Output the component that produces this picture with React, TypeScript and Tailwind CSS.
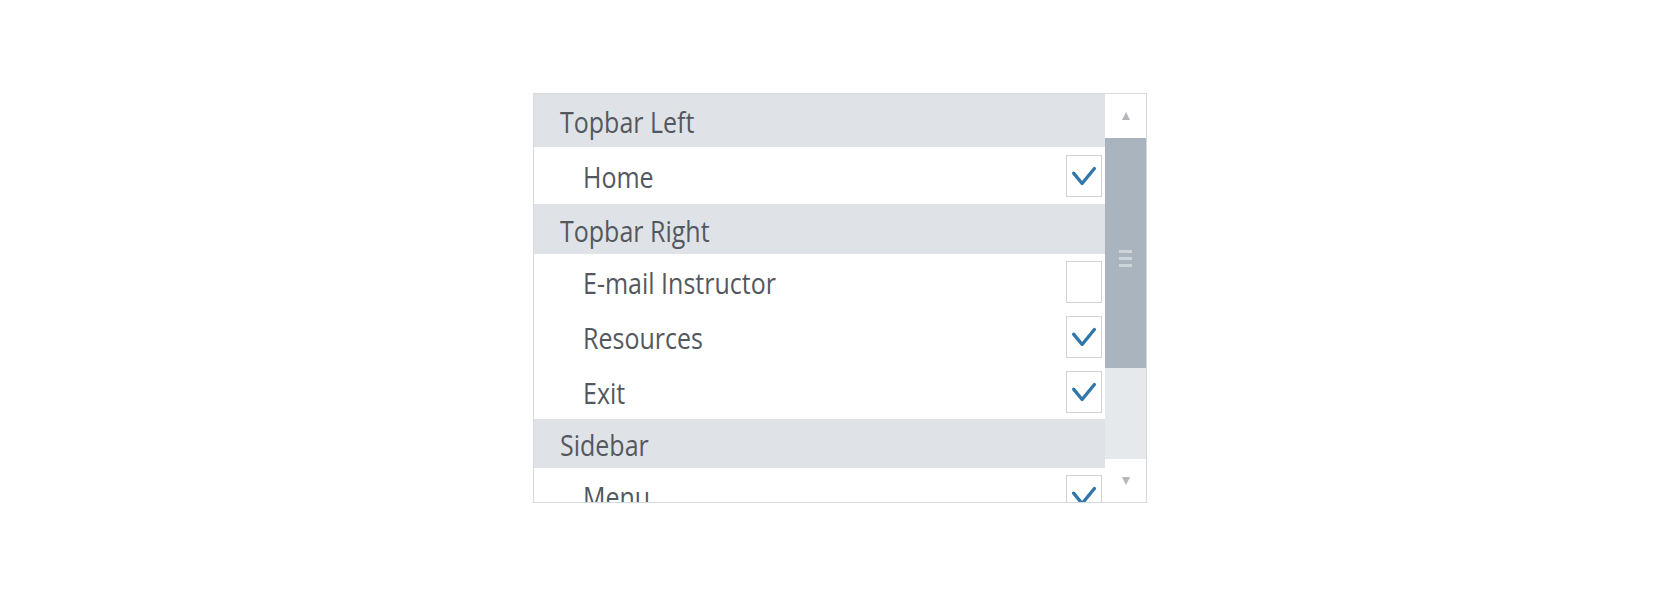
import React from 'react';

type Row = { kind: 'group' | 'item'; label: string; checked?: boolean; h: string };

const rows: Row[] = [
    { kind: 'group', label: 'Topbar Left', h: 'h-[53px]' },
    { kind: 'item', label: 'Home', checked: true, h: 'h-[57px]' },
    { kind: 'group', label: 'Topbar Right', h: 'h-[50px]' },
    { kind: 'item', label: 'E-mail Instructor', checked: false, h: 'h-[55px]' },
    { kind: 'item', label: 'Resources', checked: true, h: 'h-[55px]' },
    { kind: 'item', label: 'Exit', checked: true, h: 'h-[55px]' },
    { kind: 'group', label: 'Sidebar', h: 'h-[49px]' },
    { kind: 'item', label: 'Menu', checked: true, h: 'h-[55px]' },
];

function Check({ on }: { on?: boolean }) {
    return (
        <div className="w-[36px] h-[42px] border border-[#d3d3d3] bg-white flex items-center justify-center shrink-0">
            {on && (
                <svg width="36" height="42" viewBox="0 0 36 42">
                    <path d="M7 18 L16 29 L29 13" fill="none" stroke="#2f76a9" strokeWidth="3.5" strokeLinecap="round" strokeLinejoin="round" />
                </svg>
            )}
        </div>
    );
}

export default function App() {
    return (
        <div className="w-full h-[597px] bg-white flex justify-center pt-[93px]" style={{ fontFamily: '"Open Sans", "Noto Sans", sans-serif' }}>
            <div className="w-[614px] h-[410px] border border-[#d6d9dc] flex overflow-hidden">
                <div className="flex-1 flex flex-col overflow-hidden">
                    {rows.map((r) =>
                        r.kind === 'group' ? (
                            <div key={r.label} className={`${r.h} shrink-0 bg-[#dfe3e8] flex items-center pl-[26px]`}>
                                <span className="inline-block text-[25px] leading-none text-[#53585e] scale-y-115 translate-y-[2px]">{r.label}</span>
                            </div>
                        ) : (
                            <div key={r.label} className={`${r.h} shrink-0 bg-white flex items-center justify-between pl-[49px] pr-[3px]`}>
                                <span className="inline-block text-[25px] leading-none text-[#53585e] scale-y-115 translate-y-[2px]">{r.label}</span>
                                <Check on={r.checked} />
                            </div>
                        )
                    )}
                </div>
                <div className="w-[41px] shrink-0 flex flex-col bg-[#e6e9ec]">
                    <div className="h-[44px] bg-white flex items-center justify-center">
                        <svg width="10" height="10" viewBox="0 0 10 10">
                            <path d="M5 1 L9 9 L1 9 Z" fill="#b3b7bb" />
                        </svg>
                    </div>
                    <div className="h-[230px] bg-[#a9b4be] flex items-center justify-center">
                        <div className="flex flex-col gap-[4px] mt-[10px]">
                            <div className="w-[13px] h-[3px] bg-[#cdd4da]" />
                            <div className="w-[13px] h-[3px] bg-[#cdd4da]" />
                            <div className="w-[13px] h-[3px] bg-[#cdd4da]" />
                        </div>
                    </div>
                    <div className="flex-1 bg-[#e6e9ec]" />
                    <div className="h-[43px] bg-white flex items-center justify-center">
                        <svg width="10" height="10" viewBox="0 0 10 10">
                            <path d="M1 1 L9 1 L5 9 Z" fill="#b3b7bb" />
                        </svg>
                    </div>
                </div>
            </div>
        </div>
    );
}
